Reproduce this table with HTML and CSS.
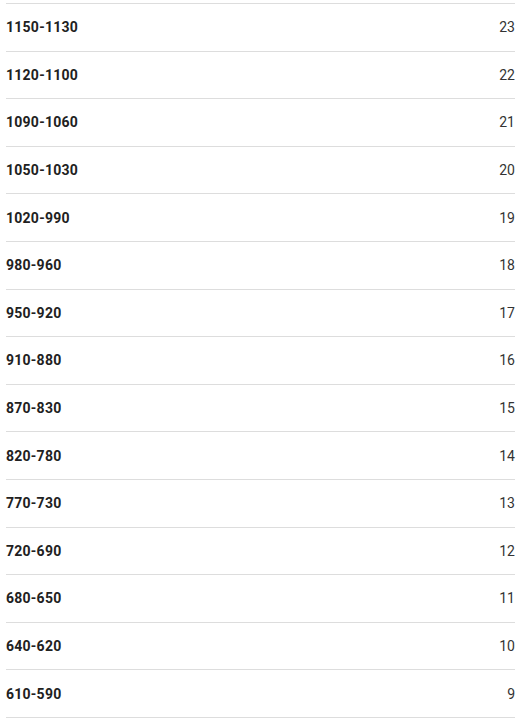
FILE: index.html
```html
<!DOCTYPE html>
<html>
<head>
<meta charset="utf-8">
<link rel="stylesheet" href="styles.css">
</head>
<body>
<div class="table">
  <div class="row"><span class="range">1150-1130</span><span class="val">23</span></div>
  <div class="row"><span class="range">1120-1100</span><span class="val">22</span></div>
  <div class="row"><span class="range">1090-1060</span><span class="val">21</span></div>
  <div class="row"><span class="range">1050-1030</span><span class="val">20</span></div>
  <div class="row"><span class="range">1020-990</span><span class="val">19</span></div>
  <div class="row"><span class="range">980-960</span><span class="val">18</span></div>
  <div class="row"><span class="range">950-920</span><span class="val">17</span></div>
  <div class="row"><span class="range">910-880</span><span class="val">16</span></div>
  <div class="row"><span class="range">870-830</span><span class="val">15</span></div>
  <div class="row"><span class="range">820-780</span><span class="val">14</span></div>
  <div class="row"><span class="range">770-730</span><span class="val">13</span></div>
  <div class="row"><span class="range">720-690</span><span class="val">12</span></div>
  <div class="row"><span class="range">680-650</span><span class="val">11</span></div>
  <div class="row"><span class="range">640-620</span><span class="val">10</span></div>
  <div class="row"><span class="range">610-590</span><span class="val">9</span></div>
</div>
</body>
</html>
```
FILE: styles.css
```css
html, body {
  margin: 0;
  padding: 0;
  background: #fff;
}
body {
  font-family: Roboto, "Liberation Sans", sans-serif;
  font-size: 14px;
  color: #212121;
}
.table {
  padding: 3px 6px 0 6px;
}
.row {
  display: flex;
  justify-content: space-between;
  align-items: center;
  height: 47.6px;
  box-sizing: border-box;
  border-bottom: 1px solid #dddddd;
}
.row:first-child {
  border-top: 1px solid #dddddd;
  height: 48.6px;
}
.range {
  font-weight: 700;
  letter-spacing: 0.25px;
}
.val {
  font-weight: 400;
  color: #333333;
}
```
